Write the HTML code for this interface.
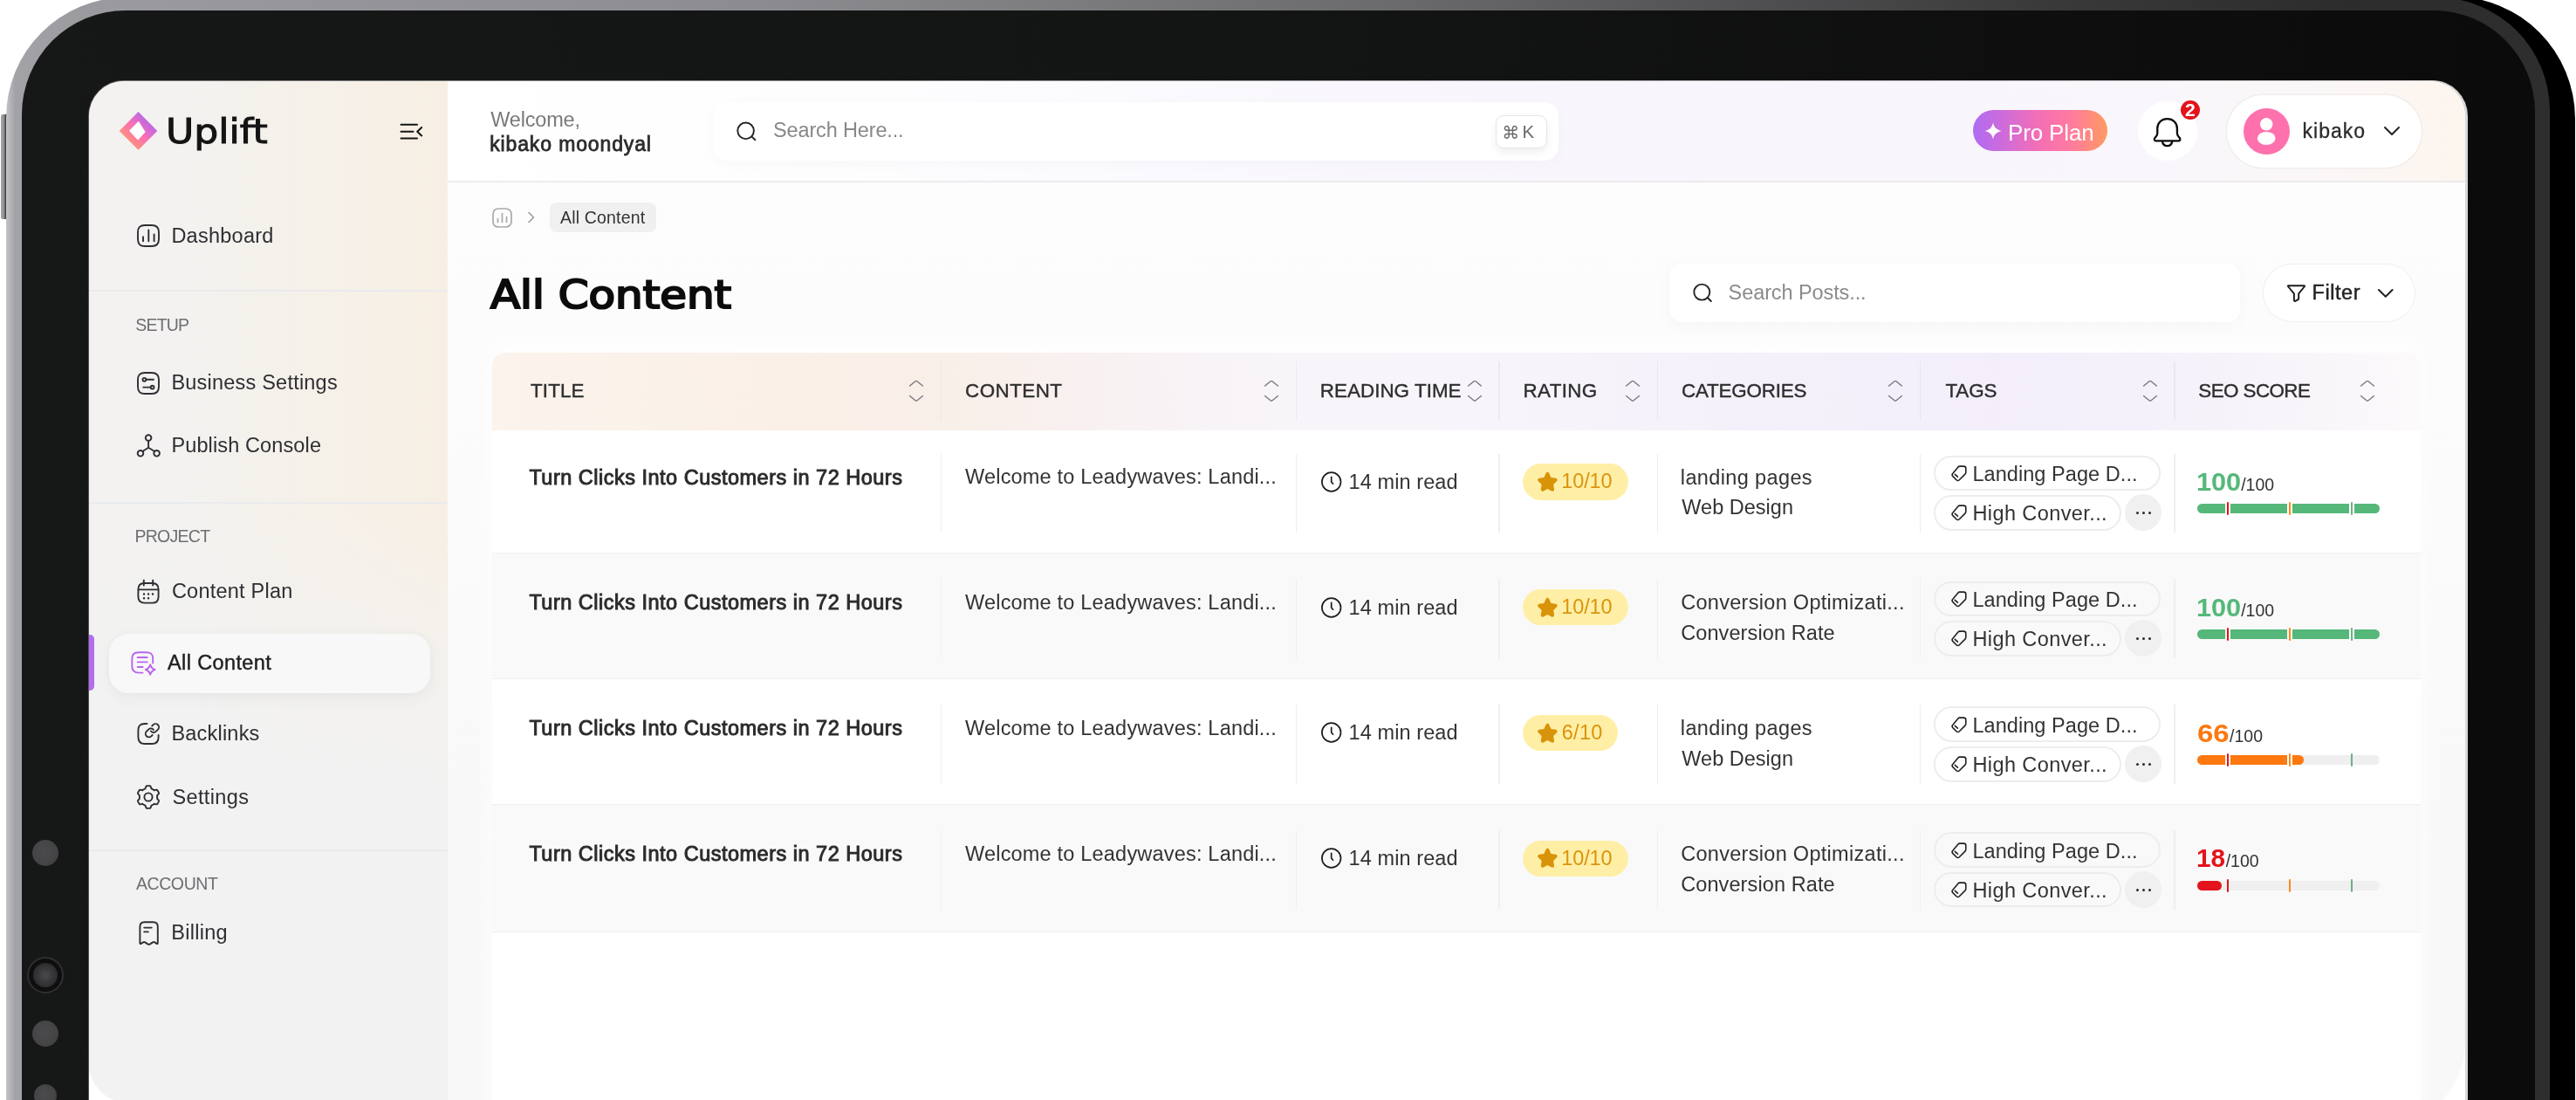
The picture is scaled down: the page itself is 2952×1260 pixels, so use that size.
<!DOCTYPE html>
<html lang="en"><head><meta charset="utf-8"><title>Uplift – All Content</title>
<style>
*{box-sizing:border-box}
html,body{margin:0;padding:0}
body{width:2952px;height:1260px;overflow:hidden;background:#fff;position:relative;font-family:"Liberation Sans",sans-serif}
.t{position:absolute;white-space:nowrap;line-height:1}
.abs{position:absolute}
svg{position:absolute;overflow:visible}
.ic{fill:none;stroke:#2e2e33;stroke-width:1.9;stroke-linecap:round;stroke-linejoin:round}
.icp{fill:none;stroke:#b765f0;stroke-width:1.9;stroke-linecap:round;stroke-linejoin:round}
.icg{fill:none;stroke:#a9a9ad;stroke-width:1.7;stroke-linecap:round;stroke-linejoin:round}
</style></head><body>


<div class="abs" style="left:1.4px;top:131px;width:8px;height:120px;background:linear-gradient(90deg,#a9a9ac 0,#8e8e91 45%,#3e3e40 70%,#4c4c4e 100%);border-radius:2px 0 0 2px"></div>
<div class="abs" style="left:40px;top:-4px;width:2911px;height:1500px;border-radius:150px 140px 0 0;background:#000"></div>
<div class="abs" style="left:7px;top:-3.5px;width:2915px;height:1500px;border-radius:138px 130px 0 0;background:linear-gradient(90deg,#c4c4c8 0,#a3a3a7 0.35%,#9b9b9f 3%,#8c8c90 30%,#6a6a6d 55%,#3a3a3b 80%,#2c2c2d 92%,#2e2e2f 100%)"></div>
<div class="abs" style="left:25px;top:11.5px;width:2880px;height:1500px;border-radius:119px 116px 0 0;background:linear-gradient(90deg,#161717 0,#131414 50%,#0b0b0b 100%)"></div>

<div class="abs" style="left:36.7px;top:962px;width:30px;height:30px;border-radius:50%;background:radial-gradient(circle at 45% 45%,#4b4b4d 0,#444446 60%,#3a3a3c 100%)"></div>
<div class="abs" style="left:30.7px;top:1096px;width:42px;height:42px;border-radius:50%;border:2.5px solid #2f2f31;background:#0e0e0f"></div>
<div class="abs" style="left:37.7px;top:1103px;width:28px;height:28px;border-radius:50%;background:radial-gradient(circle,#4a4a4c 0,#2c2c2e 70%,#232325 100%)"></div>
<div class="abs" style="left:36.7px;top:1169px;width:30px;height:30px;border-radius:50%;background:radial-gradient(circle at 45% 45%,#4b4b4d 0,#444446 60%,#3a3a3c 100%)"></div>
<div class="abs" style="left:38.7px;top:1242px;width:26px;height:26px;border-radius:50%;background:radial-gradient(circle at 45% 45%,#4b4b4d 0,#444446 60%,#3a3a3c 100%)"></div>
<div class="abs" style="left:100.5px;top:92.0px;width:2727.3px;height:1227.5px;border-radius:41px 41px 0 0;background:linear-gradient(90deg,#555 0,#777 1%,#999 50%,#cfcfcf 99%,#d8d8d8 100%)"></div>
<div id="screen" class="abs" style="left:101.5px;top:92.5px;width:2723.7000000000003px;height:1227.5px;border-radius:40px 40px 0 0;overflow:hidden;background:#fff">
<div class="abs" style="left:-101.5px;top:-92.5px;width:2952px;height:1260px;will-change:transform">
<div class="abs" style="left:512px;top:92px;width:2312.5px;height:1198px;border-radius:0 0 96px 0;background:linear-gradient(180deg,#fdfdfd 0,#fcfcfc 25%,#f9f9fa 60%,#f8f8f9 100%)"></div>
<div class="abs" style="left:512px;top:92px;width:2316px;height:115.5px;background:linear-gradient(90deg,#ffffff 0,#fdfdfe 20%,#f9f7fd 45%,#f8f5fc 62%,#f9f7fc 84%,#fbf7f7 93%,#fdf5ee 100%)"></div>
<div class="abs" style="left:512px;top:207px;width:2316px;height:1.5px;background:#ececee"></div>

<div class="abs" style="left:101px;top:92px;width:411px;height:1172px;border-radius:0 0 0 48px;background:linear-gradient(180deg,rgba(242,242,242,0) 0,rgba(242,242,242,0) 42%,rgba(242,242,242,.75) 58%,#f2f2f2 70%),linear-gradient(90deg,#f3f2f0 0,#f3f2f0 26%,#f5f1ea 55%,#f6f0e7 80%,#f7efe3 100%)"></div>
<div class="abs" style="left:512px;top:92px;width:1px;height:1180px;background:#f4efe9"></div>

<div class="abs" style="left:102px;top:332px;width:410px;height:1.5px;background:#e9eaed"></div>
<div class="abs" style="left:102px;top:575px;width:410px;height:1.5px;background:#e9eaed"></div>
<div class="abs" style="left:102px;top:973px;width:410px;height:1.5px;background:#e9eaed"></div>
<svg style="left:136px;top:127px" width="46" height="46" viewBox="0 0 46 46"><defs><linearGradient id="lg" x1="0.85" y1="0.15" x2="0.15" y2="0.85"><stop offset="0" stop-color="#a566f7"/><stop offset="0.5" stop-color="#fb6fb4"/><stop offset="1" stop-color="#ff9c6b"/></linearGradient></defs>
<path d="M22.5 1 L44.3 23 L22.5 44.8 L0.7 23 Z" fill="url(#lg)"/><path d="M22.8 11.8 L30.6 24.2 L22 33.6 L12 22.7 Z" fill="#fff"/></svg>
<span id="logo" class="t" style="left:190.2px;top:131.9px;font-size:38.8px;font-family:'DejaVu Sans',sans-serif;font-weight:400;color:#141414;letter-spacing:0.000px;-webkit-text-stroke:0.95px #141414;transform:scaleX(1.1364);transform-origin:0 0;">Uplift</span>
<svg style="left:458px;top:140px" width="28" height="22" viewBox="0 0 28 22"><g fill="none" stroke="#141414" stroke-width="2" stroke-linecap="round" stroke-linejoin="round"><path d="M1.5 2.8H20M1.5 10.7H15.5M1.5 18.6H20M25.2 6L20.2 10.7L25.2 15.4"/></g></svg>
<span id="n1" class="t" style="left:196.4px;top:258.9px;font-size:23.5px;font-family:'Liberation Sans',sans-serif;font-weight:400;color:#2e2e33;letter-spacing:0.249px;">Dashboard</span>
<span id="n2" class="t" style="left:196.4px;top:427.1px;font-size:23.5px;font-family:'Liberation Sans',sans-serif;font-weight:400;color:#2e2e33;letter-spacing:0.217px;">Business Settings</span>
<span id="n3" class="t" style="left:196.4px;top:499.3px;font-size:23.5px;font-family:'Liberation Sans',sans-serif;font-weight:400;color:#2e2e33;letter-spacing:0.126px;">Publish Console</span>
<span id="n4" class="t" style="left:196.9px;top:666.3px;font-size:23.5px;font-family:'Liberation Sans',sans-serif;font-weight:400;color:#2e2e33;letter-spacing:0.232px;">Content Plan</span>
<span id="n6" class="t" style="left:196.4px;top:829.1px;font-size:23.5px;font-family:'Liberation Sans',sans-serif;font-weight:400;color:#2e2e33;letter-spacing:0.214px;">Backlinks</span>
<span id="n7" class="t" style="left:197.5px;top:901.6px;font-size:23.5px;font-family:'Liberation Sans',sans-serif;font-weight:400;color:#2e2e33;letter-spacing:0.365px;">Settings</span>
<span id="n8" class="t" style="left:196.2px;top:1056.8px;font-size:23.5px;font-family:'Liberation Sans',sans-serif;font-weight:400;color:#2e2e33;letter-spacing:0.293px;">Billing</span>
<span id="l1" class="t" style="left:155.3px;top:362.6px;font-size:19.5px;font-family:'Liberation Sans',sans-serif;font-weight:400;color:#6e6e73;letter-spacing:-0.821px;">SETUP</span>
<span id="l2" class="t" style="left:154.4px;top:605.0px;font-size:19.5px;font-family:'Liberation Sans',sans-serif;font-weight:400;color:#6e6e73;letter-spacing:-0.725px;">PROJECT</span>
<span id="l3" class="t" style="left:155.9px;top:1002.7px;font-size:19.5px;font-family:'Liberation Sans',sans-serif;font-weight:400;color:#6e6e73;letter-spacing:-0.397px;">ACCOUNT</span>
<div class="abs" style="left:124.5px;top:725.5px;width:368.5px;height:68.5px;border-radius:22px;background:#f8f8f8;box-shadow:0 6px 18px rgba(0,0,0,.045),0 0 10px rgba(0,0,0,.02)"></div>
<div class="abs" style="left:101px;top:727px;width:7px;height:64px;border-radius:0 5px 5px 0;background:#b56cf0"></div>
<span id="n5" class="t" style="left:192.0px;top:747.9px;font-size:23.5px;font-family:'Liberation Sans',sans-serif;font-weight:400;color:#1f1f1f;letter-spacing:0.377px;-webkit-text-stroke:0.45px #1f1f1f;">All Content</span>
<svg style="left:157px;top:256.7px;" width="26" height="26" viewBox="0 0 26 26"><g class="ic"><path d="M9 1H17C22.5 1 25 3.5 25 9V17C25 22.5 22.5 25 17 25H9C3.5 25 1 22.5 1 17V9C1 3.5 3.5 1 9 1Z"/><path d="M7 14.2V19.3M13.3 6.5V19.3M19.6 11.5V19.3"/></g></svg>
<svg style="left:157px;top:425.8px;" width="26" height="26" viewBox="0 0 26 26"><g class="ic"><path d="M9 1H17C22.5 1 25 3.5 25 9V17C25 22.5 22.5 25 17 25H9C3.5 25 1 22.5 1 17V9C1 3.5 3.5 1 9 1Z"/><circle cx="8.4" cy="8.8" r="1.9"/><path d="M10.5 8.8H19"/><circle cx="17.6" cy="17.6" r="1.9"/><path d="M7.2 17.6H15.5"/></g></svg>
<svg style="left:156px;top:497px;" width="28" height="28" viewBox="0 0 28 28"><g class="ic"><circle cx="14.1" cy="4.6" r="3.3"/><circle cx="5" cy="22.3" r="3.3"/><circle cx="23.6" cy="22.3" r="3.3"/><path d="M14.1 8V15.8M14.1 15.8L7.4 20M14.1 15.8L21.2 20"/></g></svg>
<svg style="left:157px;top:663px;" width="26" height="29" viewBox="0 0 26 29"><g class="ic"><path d="M8.5 5H17.5C22 5 24.6 7.2 24.6 12V20.4C24.6 25 22 27.6 17.5 27.6H8.5C4 27.6 1.4 25 1.4 20.4V12C1.4 7.2 4 5 8.5 5Z"/><path d="M7.8 1.6V7.5M18.2 1.6V7.5M1.8 12.4H24.2"/><path d="M8 17.5H8.1M13 17.5H13.1M18 17.5H18.1M8 22.2H8.1M13 22.2H13.1" stroke-width="2.4"/></g></svg>
<svg style="left:150px;top:745px;" width="30" height="30" viewBox="0 0 30 30"><g class="icp"><path d="M25.2 14.5V9.5C25.2 4 23 2.2 17.5 2.2H9C3.5 2.2 1.3 4.5 1.3 10V17.8C1.3 23.3 3.5 25.6 9 25.6H13.5"/><path d="M7.7 8H18.7M7.7 13.4H18.7M7.7 19H13.6"/><path d="M22.2 16.3C22.9 19.3 24.3 20.9 27.6 22C24.3 23.1 22.9 24.7 22.2 27.7C21.5 24.7 20.1 23.1 16.8 22C20.1 20.9 21.5 19.3 22.2 16.3Z"/></g></svg>
<svg style="left:157px;top:827px;" width="27" height="27" viewBox="0 0 27 27"><g class="ic"><path d="M11.5 2H9C3.5 2 1.4 4.3 1.4 9.5V17.5C1.4 22.8 3.6 25 9 25H17C22.4 25 24.6 22.8 24.6 17.5V15"/><g transform="translate(8.2 0.5) scale(0.77)" stroke-width="2.45"><path d="M10 13a5 5 0 0 0 7.54.54l3-3a5 5 0 0 0-7.07-7.07l-1.72 1.71"/><path d="M14 11a5 5 0 0 0-7.54-.54l-3 3a5 5 0 0 0 7.07 7.07l1.71-1.71"/></g></g></svg>
<svg style="left:156px;top:898.5px;" width="28" height="28" viewBox="0 0 28 28"><g class="ic"><path d="M14.00 1.10L14.51 1.11L15.01 1.14L15.52 1.19L16.02 1.26L16.48 1.56L16.80 2.32L17.07 3.11L17.29 3.89L17.53 4.43L17.90 4.58L18.27 4.74L18.63 4.91L18.98 5.10L19.33 5.30L19.67 5.52L20.00 5.75L20.31 5.99L20.63 6.24L21.37 6.03L22.17 5.83L22.99 5.69L23.81 5.62L24.13 6.01L24.44 6.42L24.73 6.83L25.00 7.26L25.26 7.70L25.49 8.14L25.72 8.60L25.92 9.06L26.10 9.54L25.86 10.15L25.34 10.80L24.78 11.41L24.21 11.97L24.07 12.40L24.13 12.80L24.17 13.20L24.19 13.60L24.20 14.00L24.19 14.40L24.17 14.80L24.13 15.20L24.07 15.60L24.21 16.03L24.78 16.59L25.34 17.20L25.86 17.85L26.10 18.46L25.92 18.94L25.72 19.40L25.49 19.86L25.26 20.30L25.00 20.74L24.73 21.17L24.44 21.58L24.13 21.99L23.81 22.38L22.99 22.31L22.17 22.17L21.37 21.97L20.63 21.76L20.31 22.01L20.00 22.25L19.67 22.48L19.33 22.70L18.98 22.90L18.63 23.09L18.27 23.26L17.90 23.42L17.53 23.57L17.29 24.11L17.07 24.89L16.80 25.68L16.48 26.44L16.02 26.74L15.52 26.81L15.01 26.86L14.51 26.89L14.00 26.90L13.49 26.89L12.99 26.86L12.48 26.81L11.98 26.74L11.52 26.44L11.20 25.68L10.93 24.89L10.71 24.11L10.47 23.57L10.10 23.42L9.73 23.26L9.37 23.09L9.02 22.90L8.67 22.70L8.33 22.48L8.00 22.25L7.69 22.01L7.37 21.76L6.63 21.97L5.83 22.17L5.01 22.31L4.19 22.38L3.87 21.99L3.56 21.58L3.27 21.17L3.00 20.74L2.74 20.30L2.51 19.86L2.28 19.40L2.08 18.94L1.90 18.46L2.14 17.85L2.66 17.20L3.22 16.59L3.79 16.03L3.93 15.60L3.87 15.20L3.83 14.80L3.81 14.40L3.80 14.00L3.81 13.60L3.83 13.20L3.87 12.80L3.93 12.40L3.79 11.97L3.22 11.41L2.66 10.80L2.14 10.15L1.90 9.54L2.08 9.06L2.28 8.60L2.51 8.14L2.74 7.70L3.00 7.26L3.27 6.83L3.56 6.42L3.87 6.01L4.19 5.62L5.01 5.69L5.83 5.83L6.63 6.03L7.37 6.24L7.69 5.99L8.00 5.75L8.33 5.52L8.67 5.30L9.02 5.10L9.37 4.91L9.73 4.74L10.10 4.58L10.47 4.43L10.71 3.89L10.93 3.11L11.20 2.32L11.52 1.56L11.98 1.26L12.48 1.19L12.99 1.14L13.49 1.11L14.00 1.10Z"/><circle cx="14" cy="14" r="4.6"/></g></svg>
<svg style="left:157.5px;top:1053.5px;" width="26" height="30" viewBox="0 0 26 30"><g class="ic"><path d="M2.4 26.3V7.5C2.4 3.8 4 2.3 7.6 2.3H17.6C21.2 2.3 22.8 3.8 22.8 7.5V26.3C22.8 27 22.1 27.3 21.5 26.9L19.3 25.4C18.6 24.9 17.7 24.9 17 25.4L14 27.4C13.2 27.9 12.1 27.9 11.3 27.4L8.3 25.4C7.6 24.9 6.7 24.9 6 25.4L3.7 26.9C3.1 27.3 2.4 27 2.4 26.3Z"/><path d="M7.2 8.6H15.8M7.2 13.4H11.8"/></g></svg>
<span id="h1" class="t" style="left:562.2px;top:125.9px;font-size:23.5px;font-family:'Liberation Sans',sans-serif;font-weight:400;color:#7a7a7a;letter-spacing:-0.184px;">Welcome,</span>
<span id="h2" class="t" style="left:561.2px;top:153.8px;font-size:23px;font-family:'Liberation Sans',sans-serif;font-weight:400;color:#2b2b2b;letter-spacing:0.868px;-webkit-text-stroke:0.8px #2b2b2b;">kibako moondyal</span>
<div class="abs" style="left:817.5px;top:116.5px;width:968.5px;height:67.5px;border-radius:16px;background:#fff;box-shadow:0 4px 16px rgba(40,30,70,.022)"></div>
<svg style="left:843px;top:138px" width="26" height="26" viewBox="0 0 26 26"><g fill="none" stroke="#222" stroke-width="1.9" stroke-linecap="round"><circle cx="11.6" cy="11.8" r="9.3"/><path d="M18.6 18.6L22.4 22.2"/></g></svg>
<span id="h3" class="t" style="left:886.0px;top:138.4px;font-size:23.5px;font-family:'Liberation Sans',sans-serif;font-weight:400;color:#888889;letter-spacing:-0.143px;">Search Here...</span>
<div class="abs" style="left:1714px;top:132px;width:58.5px;height:38px;border-radius:9px;background:#fff;border:1.5px solid #e7e7ea;box-shadow:0 5px 10px rgba(0,0,0,.06)"></div>
<span id="h4" class="t" style="left:1721.3px;top:141.6px;font-size:20px;font-family:'DejaVu Sans',sans-serif;font-weight:400;color:#6a6a6a;letter-spacing:0.000px;">⌘</span>
<span id="h5" class="t" style="left:1744.4px;top:141.1px;font-size:20.5px;font-family:'Liberation Sans',sans-serif;font-weight:400;color:#6a6a6a;letter-spacing:0.000px;">K</span>
<div class="abs" style="left:2260.5px;top:126.3px;width:154.5px;height:46.7px;border-radius:24px;background:linear-gradient(90deg,#b06cf2 0,#c86be0 18%,#f56fb4 50%,#ff7aa0 72%,#ff9a62 100%)"></div>
<svg style="left:2274px;top:140px" width="20" height="20" viewBox="0 0 20 20"><path d="M10 0.3C10.9 5.6 13.6 8.8 19.7 10C13.6 11.2 10.9 14.4 10 19.7C9.1 14.4 6.4 11.2 0.3 10C6.4 8.8 9.1 5.6 10 0.3Z" fill="#fff"/></svg>
<span id="h6" class="t" style="left:2301.0px;top:139.0px;font-size:26px;font-family:'Liberation Sans',sans-serif;font-weight:400;color:#fff;letter-spacing:-0.147px;">Pro Plan</span>
<div class="abs" style="left:2449.5px;top:116.4px;width:68px;height:68px;border-radius:50%;background:#fff"></div>
<svg style="left:2467px;top:133.9px" width="34" height="36" viewBox="0 0 34 36"><g fill="none" stroke="#0c0c0c" stroke-width="2.3" stroke-linecap="round" stroke-linejoin="round"><path d="M16.6 2.1C10 2.1 5.3 6.8 5.3 13V18.3C5.3 20.3 4.7 21.4 3.5 22.7L2.5 23.8C1.1 25.4 2 27.4 4 27.4H29.2C31.2 27.4 32.1 25.4 30.7 23.8L29.7 22.7C28.5 21.4 27.9 20.3 27.9 18.3V13C27.9 6.8 23.2 2.1 16.6 2.1Z"/><path d="M10.9 27.8C11.4 30.9 13.6 33.2 16.6 33.2C19.6 33.2 21.8 30.9 22.3 27.8"/></g></svg>
<div class="abs" style="left:2498.8px;top:114.6px;width:22.6px;height:22.6px;border-radius:50%;background:#e3131b"></div>
<span id="h7" class="t" style="left:2503.9px;top:116.9px;font-size:19.5px;font-family:'Liberation Sans',sans-serif;font-weight:700;color:#fff;letter-spacing:0.000px;transform:scaleX(1.0872);transform-origin:0 0;">2</span>
<div class="abs" style="left:2551.8px;top:108.6px;width:223.2px;height:83.6px;border-radius:42px;background:#fff;box-shadow:0 0 0 1.5px rgba(0,0,0,.035)"></div>
<div class="abs" style="left:2570.9px;top:124.1px;width:52.8px;height:52.8px;border-radius:50%;background:#fe71ad"></div>
<svg style="left:2570.9px;top:124.1px" width="52.8" height="52.8" viewBox="0 0 52.8 52.8"><circle cx="26.2" cy="18.3" r="7.2" fill="#fff"/><ellipse cx="26.2" cy="34.4" rx="10.4" ry="7.5" fill="#fff"/></svg>
<span id="h8" class="t" style="left:2638.6px;top:138.5px;font-size:23px;font-family:'Liberation Sans',sans-serif;font-weight:400;color:#2b2b2b;letter-spacing:0.997px;-webkit-text-stroke:0.3px #2b2b2b;">kibako</span>
<svg style="left:2731px;top:143px" width="20" height="14" viewBox="0 0 20 14"><path d="M2 3L10 11L18 3" fill="none" stroke="#222" stroke-width="2" stroke-linecap="round" stroke-linejoin="round"/></svg>
<svg style="left:563.5px;top:237.5px;" width="23" height="23" viewBox="0 0 23 23"><g class="icg"><path d="M8 1H15C20 1 22 3 22 8V15C22 20 20 22 15 22H8C3 22 1 20 1 15V8C1 3 3 1 8 1Z"/><path d="M6.5 12.5V16.5M11.5 6.5V16.5M16.5 10.5V16.5"/></g></svg>
<svg style="left:604px;top:241px" width="10" height="16" viewBox="0 0 10 16"><path d="M2 2.5L7.5 8L2 13.5" fill="none" stroke="#9a9a9e" stroke-width="1.6" stroke-linecap="round" stroke-linejoin="round"/></svg>
<div class="abs" style="left:629.8px;top:232px;width:122.5px;height:34.3px;border-radius:8px;background:#f0f0f0"></div>
<span id="b1" class="t" style="left:642.0px;top:240.0px;font-size:19.5px;font-family:'Liberation Sans',sans-serif;font-weight:400;color:#333;letter-spacing:0.175px;">All Content</span>
<span id="title" class="t" style="left:562.2px;top:316.4px;font-size:44.5px;font-family:'DejaVu Sans',sans-serif;font-weight:400;color:#0c0c0c;letter-spacing:0.000px;-webkit-text-stroke:2.2px #0c0c0c;transform:scaleX(1.1208);transform-origin:0 0;">All Content</span>
<div class="abs" style="left:1913px;top:302.4px;width:653.6px;height:66.6px;border-radius:15px;background:#fff;box-shadow:0 4px 20px rgba(0,0,0,.03)"></div>
<svg style="left:1938.5px;top:323px" width="26" height="26" viewBox="0 0 26 26"><g fill="none" stroke="#222" stroke-width="1.9" stroke-linecap="round"><circle cx="11.3" cy="11.6" r="9"/><path d="M18 18.3L21.8 22"/></g></svg>
<span id="s1" class="t" style="left:1980.6px;top:323.9px;font-size:23.5px;font-family:'Liberation Sans',sans-serif;font-weight:400;color:#8b8b8b;letter-spacing:-0.092px;">Search Posts...</span>
<div class="abs" style="left:2592.8px;top:302.4px;width:175.2px;height:66.6px;border-radius:34px;background:#fff;border:1.5px solid #efeff1"></div>
<svg style="left:2620px;top:325px" width="23" height="22" viewBox="0 0 23 22"><path d="M2.2 2.2H20.6C21 2.2 21.2 2.7 21 3L14.2 11.3V17.2C14.2 17.6 14 18 13.6 18.2L10.4 19.8C9.6 20.2 8.9 19.7 8.9 18.9V11.3L2 3C1.7 2.7 1.9 2.2 2.2 2.2Z" fill="none" stroke="#1c1c1c" stroke-width="1.9" stroke-linejoin="round"/></svg>
<span id="s2" class="t" style="left:2649.5px;top:323.9px;font-size:23.5px;font-family:'Liberation Sans',sans-serif;font-weight:400;color:#222;letter-spacing:0.546px;-webkit-text-stroke:0.45px #222;">Filter</span>
<svg style="left:2724px;top:329px" width="20" height="14" viewBox="0 0 20 14"><path d="M2 3L9.8 10.8L17.6 3" fill="none" stroke="#222" stroke-width="2" stroke-linecap="round" stroke-linejoin="round"/></svg>
<div class="abs" style="left:563.5px;top:403.5px;width:2210.2px;height:900px;border-radius:15px 15px 0 0;background:#fff;box-shadow:0 -10px 28px rgba(255,255,255,.9)"></div>
<div class="abs" style="left:563.5px;top:403.5px;width:2210.2px;height:900px;border-radius:15px 15px 0 0;background:#fff;overflow:hidden">
<div class="abs" style="left:0;top:0;width:100%;height:89.3px;background:linear-gradient(90deg,#fbf3ec 0,#faf0e7 14%,#f9efe9 24%,#f8f2f4 34%,#f8f5fa 42%,#f7f4fb 52%,#f5f1fa 64%,#f3eefa 78%,#f6f2fa 89%,#fcfafb 100%)"></div>
</div>
<div class="abs" style="left:1077.55px;top:414px;width:1.5px;height:67px;background:rgba(60,40,90,.05)"></div>
<div class="abs" style="left:1484.75px;top:414px;width:1.5px;height:67px;background:rgba(60,40,90,.05)"></div>
<div class="abs" style="left:1717.25px;top:414px;width:1.5px;height:67px;background:rgba(60,40,90,.05)"></div>
<div class="abs" style="left:1898.95px;top:414px;width:1.5px;height:67px;background:rgba(60,40,90,.05)"></div>
<div class="abs" style="left:2199.75px;top:414px;width:1.5px;height:67px;background:rgba(60,40,90,.05)"></div>
<div class="abs" style="left:2491.25px;top:414px;width:1.5px;height:67px;background:rgba(60,40,90,.05)"></div>
<span id="th1" class="t" style="left:608.1px;top:436.9px;font-size:22.4px;font-family:'Liberation Sans',sans-serif;font-weight:400;color:#2e2e2e;letter-spacing:0.076px;-webkit-text-stroke:0.4px #2e2e2e;">TITLE</span>
<span id="th2" class="t" style="left:1106.0px;top:436.9px;font-size:22.4px;font-family:'Liberation Sans',sans-serif;font-weight:400;color:#2e2e2e;letter-spacing:0.462px;-webkit-text-stroke:0.4px #2e2e2e;">CONTENT</span>
<span id="th3" class="t" style="left:1512.8px;top:436.9px;font-size:22.4px;font-family:'Liberation Sans',sans-serif;font-weight:400;color:#2e2e2e;letter-spacing:0.037px;-webkit-text-stroke:0.4px #2e2e2e;">READING TIME</span>
<span id="th4" class="t" style="left:1745.5px;top:436.9px;font-size:22.4px;font-family:'Liberation Sans',sans-serif;font-weight:400;color:#2e2e2e;letter-spacing:0.353px;-webkit-text-stroke:0.4px #2e2e2e;">RATING</span>
<span id="th5" class="t" style="left:1927.0px;top:436.9px;font-size:22.4px;font-family:'Liberation Sans',sans-serif;font-weight:400;color:#2e2e2e;letter-spacing:-0.180px;-webkit-text-stroke:0.4px #2e2e2e;">CATEGORIES</span>
<span id="th6" class="t" style="left:2229.5px;top:436.9px;font-size:22.4px;font-family:'Liberation Sans',sans-serif;font-weight:400;color:#2e2e2e;letter-spacing:-0.145px;-webkit-text-stroke:0.4px #2e2e2e;">TAGS</span>
<span id="th7" class="t" style="left:2519.3px;top:436.9px;font-size:22.4px;font-family:'Liberation Sans',sans-serif;font-weight:400;color:#2e2e2e;letter-spacing:-0.568px;-webkit-text-stroke:0.4px #2e2e2e;">SEO SCORE</span>
<svg style="left:1041px;top:434.4px" width="18" height="27" viewBox="0 0 18 27"><path d="M1.6 8.1L8 2.8Q9 2 10 2.8L16.4 8.1M1.6 19.4L8 24.7Q9 25.5 10 24.7L16.4 19.4" fill="none" stroke="#77777b" stroke-width="1.35" stroke-linecap="round" stroke-linejoin="round"/></svg>
<svg style="left:1447.5px;top:434.4px" width="18" height="27" viewBox="0 0 18 27"><path d="M1.6 8.1L8 2.8Q9 2 10 2.8L16.4 8.1M1.6 19.4L8 24.7Q9 25.5 10 24.7L16.4 19.4" fill="none" stroke="#77777b" stroke-width="1.35" stroke-linecap="round" stroke-linejoin="round"/></svg>
<svg style="left:1681px;top:434.4px" width="18" height="27" viewBox="0 0 18 27"><path d="M1.6 8.1L8 2.8Q9 2 10 2.8L16.4 8.1M1.6 19.4L8 24.7Q9 25.5 10 24.7L16.4 19.4" fill="none" stroke="#77777b" stroke-width="1.35" stroke-linecap="round" stroke-linejoin="round"/></svg>
<svg style="left:1862px;top:434.4px" width="18" height="27" viewBox="0 0 18 27"><path d="M1.6 8.1L8 2.8Q9 2 10 2.8L16.4 8.1M1.6 19.4L8 24.7Q9 25.5 10 24.7L16.4 19.4" fill="none" stroke="#77777b" stroke-width="1.35" stroke-linecap="round" stroke-linejoin="round"/></svg>
<svg style="left:2163.3px;top:434.4px" width="18" height="27" viewBox="0 0 18 27"><path d="M1.6 8.1L8 2.8Q9 2 10 2.8L16.4 8.1M1.6 19.4L8 24.7Q9 25.5 10 24.7L16.4 19.4" fill="none" stroke="#77777b" stroke-width="1.35" stroke-linecap="round" stroke-linejoin="round"/></svg>
<svg style="left:2454.6px;top:434.4px" width="18" height="27" viewBox="0 0 18 27"><path d="M1.6 8.1L8 2.8Q9 2 10 2.8L16.4 8.1M1.6 19.4L8 24.7Q9 25.5 10 24.7L16.4 19.4" fill="none" stroke="#77777b" stroke-width="1.35" stroke-linecap="round" stroke-linejoin="round"/></svg>
<svg style="left:2704px;top:434.4px" width="18" height="27" viewBox="0 0 18 27"><path d="M1.6 8.1L8 2.8Q9 2 10 2.8L16.4 8.1M1.6 19.4L8 24.7Q9 25.5 10 24.7L16.4 19.4" fill="none" stroke="#77777b" stroke-width="1.35" stroke-linecap="round" stroke-linejoin="round"/></svg>
<div class="abs" style="left:563.5px;top:492.8px;width:2210.2px;height:141.6px;background:#fff;border-bottom:1.5px solid #efefef"></div>
<div class="abs" style="left:1077.55px;top:519.5px;width:1.5px;height:90.5px;background:#efeff1"></div>
<div class="abs" style="left:1484.75px;top:519.5px;width:1.5px;height:90.5px;background:#efeff1"></div>
<div class="abs" style="left:1717.25px;top:519.5px;width:1.5px;height:90.5px;background:#efeff1"></div>
<div class="abs" style="left:1898.95px;top:519.5px;width:1.5px;height:90.5px;background:#efeff1"></div>
<div class="abs" style="left:2199.75px;top:519.5px;width:1.5px;height:90.5px;background:#efeff1"></div>
<div class="abs" style="left:2491.25px;top:519.5px;width:1.5px;height:90.5px;background:#efeff1"></div>
<span id="r0a" class="t" style="left:606.4px;top:535.5px;font-size:23.5px;font-family:'Liberation Sans',sans-serif;font-weight:400;color:#2b2b2b;letter-spacing:0.494px;-webkit-text-stroke:0.95px #2b2b2b;">Turn Clicks Into Customers in 72 Hours</span>
<span id="r0b" class="t" style="left:1106.0px;top:535.2px;font-size:23.5px;font-family:'Liberation Sans',sans-serif;font-weight:400;color:#333;letter-spacing:0.196px;">Welcome to Leadywaves: Landi...</span>
<svg style="left:1513px;top:538.7px" width="26" height="26" viewBox="0 0 26 26"><g fill="none" stroke="#1c1c1c" stroke-width="1.7" stroke-linecap="round" stroke-linejoin="round"><circle cx="12.7" cy="13" r="10.8"/><path d="M12.7 7.4V13L14.6 15.2"/></g></svg>
<span id="r0c" class="t" style="left:1545.5px;top:540.6px;font-size:23.5px;font-family:'Liberation Sans',sans-serif;font-weight:400;color:#333;letter-spacing:0.099px;">14 min read</span>
<div class="abs" style="left:1745px;top:531.0px;width:121px;height:41.5px;border-radius:21px;background:#ffefa6"></div>
<svg style="left:1759.7px;top:538.8px" width="26.8" height="26.8" viewBox="0 0 24 24"><path d="M12 1.6C12.7 1.6 13.3 2 13.6 2.7L15.7 7.1L20.5 7.8C22 8 22.6 9.8 21.5 10.9L18 14.3L18.8 19.1C19.1 20.6 17.5 21.7 16.2 21L12 18.7L7.8 21C6.5 21.7 4.9 20.6 5.2 19.1L6 14.3L2.5 10.9C1.4 9.8 2 8 3.5 7.8L8.3 7.1L10.4 2.7C10.7 2 11.3 1.6 12 1.6Z" fill="#d99309"/></svg>
<span id="r0d" class="t" style="left:1789.3px;top:540.2px;font-size:23.5px;font-family:'Liberation Sans',sans-serif;font-weight:400;color:#db940c;letter-spacing:-0.138px;">10/10</span>
<span id="r0e" class="t" style="left:1925.8px;top:535.5px;font-size:23.5px;font-family:'Liberation Sans',sans-serif;font-weight:400;color:#333;letter-spacing:0.371px;">landing pages</span>
<span id="r0f" class="t" style="left:1927.3px;top:570.4px;font-size:23.5px;font-family:'Liberation Sans',sans-serif;font-weight:400;color:#333;letter-spacing:0.016px;">Web Design</span>
<div class="abs" style="left:2216.3px;top:521.7px;width:260.2px;height:40.6px;border-radius:21px;border:2px solid #ededed"></div>
<div class="abs" style="left:2216.3px;top:567.1px;width:214.8px;height:40.8px;border-radius:21px;border:2px solid #ededed"></div>
<svg style="left:2234.8px;top:532.1px" width="20" height="20" viewBox="0 0 20 20"><g fill="none" stroke="#222" stroke-width="1.6" stroke-linecap="round" stroke-linejoin="round"><path d="M10.6 2.1H15.3C16.9 2.1 17.8 3 17.8 4.6V9C17.8 9.8 17.5 10.5 16.9 11.1L10.3 17.7C9.3 18.7 8 18.7 7 17.7L2.9 13.6C1.9 12.6 1.9 11.3 2.9 10.3L8.9 3C9.4 2.4 9.9 2.1 10.6 2.1Z"/><path d="M5.3 11.4L8.4 14.1"/></g></svg>
<svg style="left:2234.8px;top:577.0px" width="20" height="20" viewBox="0 0 20 20"><g fill="none" stroke="#222" stroke-width="1.6" stroke-linecap="round" stroke-linejoin="round"><path d="M10.6 2.1H15.3C16.9 2.1 17.8 3 17.8 4.6V9C17.8 9.8 17.5 10.5 16.9 11.1L10.3 17.7C9.3 18.7 8 18.7 7 17.7L2.9 13.6C1.9 12.6 1.9 11.3 2.9 10.3L8.9 3C9.4 2.4 9.9 2.1 10.6 2.1Z"/><path d="M5.3 11.4L8.4 14.1"/></g></svg>
<span id="r0g" class="t" style="left:2260.4px;top:532.0px;font-size:23.5px;font-family:'Liberation Sans',sans-serif;font-weight:400;color:#333;letter-spacing:0.064px;">Landing Page D...</span>
<span id="r0h" class="t" style="left:2260.4px;top:576.9px;font-size:23.5px;font-family:'Liberation Sans',sans-serif;font-weight:400;color:#333;letter-spacing:0.412px;">High Conver...</span>
<div class="abs" style="left:2435.3px;top:566.4px;width:42px;height:42px;border-radius:50%;background:#f0f0f0"></div>
<div class="abs" style="left:2448.3px;top:586.1px;width:3px;height:3px;border-radius:50%;background:#2a2a2a"></div>
<div class="abs" style="left:2454.9px;top:586.1px;width:3px;height:3px;border-radius:50%;background:#2a2a2a"></div>
<div class="abs" style="left:2461.5px;top:586.1px;width:3px;height:3px;border-radius:50%;background:#2a2a2a"></div>
<span id="r0s" class="t" style="left:2516.7px;top:537.9px;font-size:29px;font-family:'Liberation Sans',sans-serif;font-weight:700;color:#55b87a;letter-spacing:0.000px;transform:scaleX(1.0573);transform-origin:0 0;">100</span>
<span id="r0t" class="t" style="left:2568.2px;top:545.9px;font-size:19.5px;font-family:'Liberation Sans',sans-serif;font-weight:400;color:#333;letter-spacing:0.011px;">/100</span>
<div class="abs" style="left:2518.2px;top:577.0px;width:208.6px;height:11.4px;border-radius:6px;background:#efefef"></div>
<div class="abs" style="left:2518.2px;top:577.0px;width:208.6px;height:11.4px;border-radius:6px;background:#55b87a"></div>
<div class="abs" style="left:2549.9px;top:575.0px;width:6px;height:15.4px;background:#fff"></div>
<div class="abs" style="left:2551.7px;top:575.0px;width:2.5px;height:15.4px;border-radius:1px;background:#e3141b"></div>
<div class="abs" style="left:2621.0px;top:575.0px;width:6px;height:15.4px;background:#fff"></div>
<div class="abs" style="left:2622.8px;top:575.0px;width:2.5px;height:15.4px;border-radius:1px;background:#fd8a1e"></div>
<div class="abs" style="left:2692.0px;top:575.0px;width:6px;height:15.4px;background:#fff"></div>
<div class="abs" style="left:2693.8px;top:575.0px;width:2.5px;height:15.4px;border-radius:1px;background:#6fae86"></div>
<div class="abs" style="left:563.5px;top:634.4px;width:2210.2px;height:143.9px;background:#f9f9f9;border-bottom:1.5px solid #efefef"></div>
<div class="abs" style="left:1077.55px;top:663.4px;width:1.5px;height:90.5px;background:#efeff1"></div>
<div class="abs" style="left:1484.75px;top:663.4px;width:1.5px;height:90.5px;background:#efeff1"></div>
<div class="abs" style="left:1717.25px;top:663.4px;width:1.5px;height:90.5px;background:#efeff1"></div>
<div class="abs" style="left:1898.95px;top:663.4px;width:1.5px;height:90.5px;background:#efeff1"></div>
<div class="abs" style="left:2199.75px;top:663.4px;width:1.5px;height:90.5px;background:#efeff1"></div>
<div class="abs" style="left:2491.25px;top:663.4px;width:1.5px;height:90.5px;background:#efeff1"></div>
<span id="r1a" class="t" style="left:606.4px;top:679.4px;font-size:23.5px;font-family:'Liberation Sans',sans-serif;font-weight:400;color:#2b2b2b;letter-spacing:0.494px;-webkit-text-stroke:0.95px #2b2b2b;">Turn Clicks Into Customers in 72 Hours</span>
<span id="r1b" class="t" style="left:1106.0px;top:679.1px;font-size:23.5px;font-family:'Liberation Sans',sans-serif;font-weight:400;color:#333;letter-spacing:0.196px;">Welcome to Leadywaves: Landi...</span>
<svg style="left:1513px;top:682.5px" width="26" height="26" viewBox="0 0 26 26"><g fill="none" stroke="#1c1c1c" stroke-width="1.7" stroke-linecap="round" stroke-linejoin="round"><circle cx="12.7" cy="13" r="10.8"/><path d="M12.7 7.4V13L14.6 15.2"/></g></svg>
<span id="r1c" class="t" style="left:1545.5px;top:684.5px;font-size:23.5px;font-family:'Liberation Sans',sans-serif;font-weight:400;color:#333;letter-spacing:0.099px;">14 min read</span>
<div class="abs" style="left:1745px;top:674.9px;width:121px;height:41.5px;border-radius:21px;background:#ffefa6"></div>
<svg style="left:1759.7px;top:682.6px" width="26.8" height="26.8" viewBox="0 0 24 24"><path d="M12 1.6C12.7 1.6 13.3 2 13.6 2.7L15.7 7.1L20.5 7.8C22 8 22.6 9.8 21.5 10.9L18 14.3L18.8 19.1C19.1 20.6 17.5 21.7 16.2 21L12 18.7L7.8 21C6.5 21.7 4.9 20.6 5.2 19.1L6 14.3L2.5 10.9C1.4 9.8 2 8 3.5 7.8L8.3 7.1L10.4 2.7C10.7 2 11.3 1.6 12 1.6Z" fill="#d99309"/></svg>
<span id="r1d" class="t" style="left:1789.3px;top:684.1px;font-size:23.5px;font-family:'Liberation Sans',sans-serif;font-weight:400;color:#db940c;letter-spacing:-0.138px;">10/10</span>
<span id="r1e" class="t" style="left:1926.2px;top:679.4px;font-size:23.5px;font-family:'Liberation Sans',sans-serif;font-weight:400;color:#333;letter-spacing:0.295px;">Conversion Optimizati...</span>
<span id="r1f" class="t" style="left:1926.2px;top:714.3px;font-size:23.5px;font-family:'Liberation Sans',sans-serif;font-weight:400;color:#333;letter-spacing:0.101px;">Conversion Rate</span>
<div class="abs" style="left:2216.3px;top:665.5px;width:260.2px;height:40.6px;border-radius:21px;border:2px solid #ededed"></div>
<div class="abs" style="left:2216.3px;top:711.0px;width:214.8px;height:40.8px;border-radius:21px;border:2px solid #ededed"></div>
<svg style="left:2234.8px;top:676.0px" width="20" height="20" viewBox="0 0 20 20"><g fill="none" stroke="#222" stroke-width="1.6" stroke-linecap="round" stroke-linejoin="round"><path d="M10.6 2.1H15.3C16.9 2.1 17.8 3 17.8 4.6V9C17.8 9.8 17.5 10.5 16.9 11.1L10.3 17.7C9.3 18.7 8 18.7 7 17.7L2.9 13.6C1.9 12.6 1.9 11.3 2.9 10.3L8.9 3C9.4 2.4 9.9 2.1 10.6 2.1Z"/><path d="M5.3 11.4L8.4 14.1"/></g></svg>
<svg style="left:2234.8px;top:720.9px" width="20" height="20" viewBox="0 0 20 20"><g fill="none" stroke="#222" stroke-width="1.6" stroke-linecap="round" stroke-linejoin="round"><path d="M10.6 2.1H15.3C16.9 2.1 17.8 3 17.8 4.6V9C17.8 9.8 17.5 10.5 16.9 11.1L10.3 17.7C9.3 18.7 8 18.7 7 17.7L2.9 13.6C1.9 12.6 1.9 11.3 2.9 10.3L8.9 3C9.4 2.4 9.9 2.1 10.6 2.1Z"/><path d="M5.3 11.4L8.4 14.1"/></g></svg>
<span id="r1g" class="t" style="left:2260.4px;top:675.9px;font-size:23.5px;font-family:'Liberation Sans',sans-serif;font-weight:400;color:#333;letter-spacing:0.064px;">Landing Page D...</span>
<span id="r1h" class="t" style="left:2260.4px;top:720.8px;font-size:23.5px;font-family:'Liberation Sans',sans-serif;font-weight:400;color:#333;letter-spacing:0.412px;">High Conver...</span>
<div class="abs" style="left:2435.3px;top:710.2px;width:42px;height:42px;border-radius:50%;background:#f0f0f0"></div>
<div class="abs" style="left:2448.3px;top:730.0px;width:3px;height:3px;border-radius:50%;background:#2a2a2a"></div>
<div class="abs" style="left:2454.9px;top:730.0px;width:3px;height:3px;border-radius:50%;background:#2a2a2a"></div>
<div class="abs" style="left:2461.5px;top:730.0px;width:3px;height:3px;border-radius:50%;background:#2a2a2a"></div>
<span id="r1s" class="t" style="left:2516.7px;top:681.7px;font-size:29px;font-family:'Liberation Sans',sans-serif;font-weight:700;color:#55b87a;letter-spacing:0.000px;transform:scaleX(1.0573);transform-origin:0 0;">100</span>
<span id="r1t" class="t" style="left:2568.2px;top:689.7px;font-size:19.5px;font-family:'Liberation Sans',sans-serif;font-weight:400;color:#333;letter-spacing:0.011px;">/100</span>
<div class="abs" style="left:2518.2px;top:720.9px;width:208.6px;height:11.4px;border-radius:6px;background:#efefef"></div>
<div class="abs" style="left:2518.2px;top:720.9px;width:208.6px;height:11.4px;border-radius:6px;background:#55b87a"></div>
<div class="abs" style="left:2549.9px;top:718.9px;width:6px;height:15.4px;background:#f9f9f9"></div>
<div class="abs" style="left:2551.7px;top:718.9px;width:2.5px;height:15.4px;border-radius:1px;background:#e3141b"></div>
<div class="abs" style="left:2621.0px;top:718.9px;width:6px;height:15.4px;background:#f9f9f9"></div>
<div class="abs" style="left:2622.8px;top:718.9px;width:2.5px;height:15.4px;border-radius:1px;background:#fd8a1e"></div>
<div class="abs" style="left:2692.0px;top:718.9px;width:6px;height:15.4px;background:#f9f9f9"></div>
<div class="abs" style="left:2693.8px;top:718.9px;width:2.5px;height:15.4px;border-radius:1px;background:#6fae86"></div>
<div class="abs" style="left:563.5px;top:778.2px;width:2210.2px;height:143.8px;background:#fff;border-bottom:1.5px solid #efefef"></div>
<div class="abs" style="left:1077.55px;top:807.2px;width:1.5px;height:90.5px;background:#efeff1"></div>
<div class="abs" style="left:1484.75px;top:807.2px;width:1.5px;height:90.5px;background:#efeff1"></div>
<div class="abs" style="left:1717.25px;top:807.2px;width:1.5px;height:90.5px;background:#efeff1"></div>
<div class="abs" style="left:1898.95px;top:807.2px;width:1.5px;height:90.5px;background:#efeff1"></div>
<div class="abs" style="left:2199.75px;top:807.2px;width:1.5px;height:90.5px;background:#efeff1"></div>
<div class="abs" style="left:2491.25px;top:807.2px;width:1.5px;height:90.5px;background:#efeff1"></div>
<span id="r2a" class="t" style="left:606.4px;top:823.2px;font-size:23.5px;font-family:'Liberation Sans',sans-serif;font-weight:400;color:#2b2b2b;letter-spacing:0.494px;-webkit-text-stroke:0.95px #2b2b2b;">Turn Clicks Into Customers in 72 Hours</span>
<span id="r2b" class="t" style="left:1106.0px;top:822.9px;font-size:23.5px;font-family:'Liberation Sans',sans-serif;font-weight:400;color:#333;letter-spacing:0.196px;">Welcome to Leadywaves: Landi...</span>
<svg style="left:1513px;top:826.4px" width="26" height="26" viewBox="0 0 26 26"><g fill="none" stroke="#1c1c1c" stroke-width="1.7" stroke-linecap="round" stroke-linejoin="round"><circle cx="12.7" cy="13" r="10.8"/><path d="M12.7 7.4V13L14.6 15.2"/></g></svg>
<span id="r2c" class="t" style="left:1545.5px;top:828.3px;font-size:23.5px;font-family:'Liberation Sans',sans-serif;font-weight:400;color:#333;letter-spacing:0.099px;">14 min read</span>
<div class="abs" style="left:1745px;top:818.7px;width:108.5px;height:41.5px;border-radius:21px;background:#ffefa6"></div>
<svg style="left:1759.7px;top:826.5px" width="26.8" height="26.8" viewBox="0 0 24 24"><path d="M12 1.6C12.7 1.6 13.3 2 13.6 2.7L15.7 7.1L20.5 7.8C22 8 22.6 9.8 21.5 10.9L18 14.3L18.8 19.1C19.1 20.6 17.5 21.7 16.2 21L12 18.7L7.8 21C6.5 21.7 4.9 20.6 5.2 19.1L6 14.3L2.5 10.9C1.4 9.8 2 8 3.5 7.8L8.3 7.1L10.4 2.7C10.7 2 11.3 1.6 12 1.6Z" fill="#d99309"/></svg>
<span id="r2d" class="t" style="left:1789.7px;top:827.9px;font-size:23.5px;font-family:'Liberation Sans',sans-serif;font-weight:400;color:#db940c;letter-spacing:0.316px;">6/10</span>
<span id="r2e" class="t" style="left:1925.8px;top:823.2px;font-size:23.5px;font-family:'Liberation Sans',sans-serif;font-weight:400;color:#333;letter-spacing:0.371px;">landing pages</span>
<span id="r2f" class="t" style="left:1927.3px;top:858.1px;font-size:23.5px;font-family:'Liberation Sans',sans-serif;font-weight:400;color:#333;letter-spacing:0.016px;">Web Design</span>
<div class="abs" style="left:2216.3px;top:809.4px;width:260.2px;height:40.6px;border-radius:21px;border:2px solid #ededed"></div>
<div class="abs" style="left:2216.3px;top:854.8px;width:214.8px;height:40.8px;border-radius:21px;border:2px solid #ededed"></div>
<svg style="left:2234.8px;top:819.8px" width="20" height="20" viewBox="0 0 20 20"><g fill="none" stroke="#222" stroke-width="1.6" stroke-linecap="round" stroke-linejoin="round"><path d="M10.6 2.1H15.3C16.9 2.1 17.8 3 17.8 4.6V9C17.8 9.8 17.5 10.5 16.9 11.1L10.3 17.7C9.3 18.7 8 18.7 7 17.7L2.9 13.6C1.9 12.6 1.9 11.3 2.9 10.3L8.9 3C9.4 2.4 9.9 2.1 10.6 2.1Z"/><path d="M5.3 11.4L8.4 14.1"/></g></svg>
<svg style="left:2234.8px;top:864.7px" width="20" height="20" viewBox="0 0 20 20"><g fill="none" stroke="#222" stroke-width="1.6" stroke-linecap="round" stroke-linejoin="round"><path d="M10.6 2.1H15.3C16.9 2.1 17.8 3 17.8 4.6V9C17.8 9.8 17.5 10.5 16.9 11.1L10.3 17.7C9.3 18.7 8 18.7 7 17.7L2.9 13.6C1.9 12.6 1.9 11.3 2.9 10.3L8.9 3C9.4 2.4 9.9 2.1 10.6 2.1Z"/><path d="M5.3 11.4L8.4 14.1"/></g></svg>
<span id="r2g" class="t" style="left:2260.4px;top:819.7px;font-size:23.5px;font-family:'Liberation Sans',sans-serif;font-weight:400;color:#333;letter-spacing:0.064px;">Landing Page D...</span>
<span id="r2h" class="t" style="left:2260.4px;top:864.6px;font-size:23.5px;font-family:'Liberation Sans',sans-serif;font-weight:400;color:#333;letter-spacing:0.412px;">High Conver...</span>
<div class="abs" style="left:2435.3px;top:854.1px;width:42px;height:42px;border-radius:50%;background:#f0f0f0"></div>
<div class="abs" style="left:2448.3px;top:873.8px;width:3px;height:3px;border-radius:50%;background:#2a2a2a"></div>
<div class="abs" style="left:2454.9px;top:873.8px;width:3px;height:3px;border-radius:50%;background:#2a2a2a"></div>
<div class="abs" style="left:2461.5px;top:873.8px;width:3px;height:3px;border-radius:50%;background:#2a2a2a"></div>
<span id="r2s" class="t" style="left:2517.6px;top:825.6px;font-size:29px;font-family:'Liberation Sans',sans-serif;font-weight:700;color:#fd780f;letter-spacing:0.000px;transform:scaleX(1.1362);transform-origin:0 0;">66</span>
<span id="r2t" class="t" style="left:2555.0px;top:833.6px;font-size:19.5px;font-family:'Liberation Sans',sans-serif;font-weight:400;color:#333;letter-spacing:0.011px;">/100</span>
<div class="abs" style="left:2518.2px;top:864.7px;width:208.6px;height:11.4px;border-radius:6px;background:#efefef"></div>
<div class="abs" style="left:2518.2px;top:864.7px;width:122.2px;height:11.4px;border-radius:6px;background:#fd780f"></div>
<div class="abs" style="left:2549.9px;top:862.7px;width:6px;height:15.4px;background:#fff"></div>
<div class="abs" style="left:2551.7px;top:862.7px;width:2.5px;height:15.4px;border-radius:1px;background:#e3141b"></div>
<div class="abs" style="left:2621.0px;top:862.7px;width:6px;height:15.4px;background:#fff"></div>
<div class="abs" style="left:2622.8px;top:862.7px;width:2.5px;height:15.4px;border-radius:1px;background:#fd8a1e"></div>
<div class="abs" style="left:2693.8px;top:862.7px;width:2.5px;height:15.4px;border-radius:1px;background:#6fae86"></div>
<div class="abs" style="left:563.5px;top:922.0px;width:2210.2px;height:145.5px;background:#f9f9f9;border-bottom:1.5px solid #efefef"></div>
<div class="abs" style="left:1077.55px;top:951.0px;width:1.5px;height:90.5px;background:#efeff1"></div>
<div class="abs" style="left:1484.75px;top:951.0px;width:1.5px;height:90.5px;background:#efeff1"></div>
<div class="abs" style="left:1717.25px;top:951.0px;width:1.5px;height:90.5px;background:#efeff1"></div>
<div class="abs" style="left:1898.95px;top:951.0px;width:1.5px;height:90.5px;background:#efeff1"></div>
<div class="abs" style="left:2199.75px;top:951.0px;width:1.5px;height:90.5px;background:#efeff1"></div>
<div class="abs" style="left:2491.25px;top:951.0px;width:1.5px;height:90.5px;background:#efeff1"></div>
<span id="r3a" class="t" style="left:606.4px;top:967.1px;font-size:23.5px;font-family:'Liberation Sans',sans-serif;font-weight:400;color:#2b2b2b;letter-spacing:0.494px;-webkit-text-stroke:0.95px #2b2b2b;">Turn Clicks Into Customers in 72 Hours</span>
<span id="r3b" class="t" style="left:1106.0px;top:966.8px;font-size:23.5px;font-family:'Liberation Sans',sans-serif;font-weight:400;color:#333;letter-spacing:0.196px;">Welcome to Leadywaves: Landi...</span>
<svg style="left:1513px;top:970.2px" width="26" height="26" viewBox="0 0 26 26"><g fill="none" stroke="#1c1c1c" stroke-width="1.7" stroke-linecap="round" stroke-linejoin="round"><circle cx="12.7" cy="13" r="10.8"/><path d="M12.7 7.4V13L14.6 15.2"/></g></svg>
<span id="r3c" class="t" style="left:1545.5px;top:972.2px;font-size:23.5px;font-family:'Liberation Sans',sans-serif;font-weight:400;color:#333;letter-spacing:0.099px;">14 min read</span>
<div class="abs" style="left:1745px;top:962.5px;width:121px;height:41.5px;border-radius:21px;background:#ffefa6"></div>
<svg style="left:1759.7px;top:970.3px" width="26.8" height="26.8" viewBox="0 0 24 24"><path d="M12 1.6C12.7 1.6 13.3 2 13.6 2.7L15.7 7.1L20.5 7.8C22 8 22.6 9.8 21.5 10.9L18 14.3L18.8 19.1C19.1 20.6 17.5 21.7 16.2 21L12 18.7L7.8 21C6.5 21.7 4.9 20.6 5.2 19.1L6 14.3L2.5 10.9C1.4 9.8 2 8 3.5 7.8L8.3 7.1L10.4 2.7C10.7 2 11.3 1.6 12 1.6Z" fill="#d99309"/></svg>
<span id="r3d" class="t" style="left:1789.3px;top:971.8px;font-size:23.5px;font-family:'Liberation Sans',sans-serif;font-weight:400;color:#db940c;letter-spacing:-0.138px;">10/10</span>
<span id="r3e" class="t" style="left:1926.2px;top:967.1px;font-size:23.5px;font-family:'Liberation Sans',sans-serif;font-weight:400;color:#333;letter-spacing:0.295px;">Conversion Optimizati...</span>
<span id="r3f" class="t" style="left:1926.2px;top:1002.0px;font-size:23.5px;font-family:'Liberation Sans',sans-serif;font-weight:400;color:#333;letter-spacing:0.101px;">Conversion Rate</span>
<div class="abs" style="left:2216.3px;top:953.2px;width:260.2px;height:40.6px;border-radius:21px;border:2px solid #ededed"></div>
<div class="abs" style="left:2216.3px;top:998.6px;width:214.8px;height:40.8px;border-radius:21px;border:2px solid #ededed"></div>
<svg style="left:2234.8px;top:963.6px" width="20" height="20" viewBox="0 0 20 20"><g fill="none" stroke="#222" stroke-width="1.6" stroke-linecap="round" stroke-linejoin="round"><path d="M10.6 2.1H15.3C16.9 2.1 17.8 3 17.8 4.6V9C17.8 9.8 17.5 10.5 16.9 11.1L10.3 17.7C9.3 18.7 8 18.7 7 17.7L2.9 13.6C1.9 12.6 1.9 11.3 2.9 10.3L8.9 3C9.4 2.4 9.9 2.1 10.6 2.1Z"/><path d="M5.3 11.4L8.4 14.1"/></g></svg>
<svg style="left:2234.8px;top:1008.5px" width="20" height="20" viewBox="0 0 20 20"><g fill="none" stroke="#222" stroke-width="1.6" stroke-linecap="round" stroke-linejoin="round"><path d="M10.6 2.1H15.3C16.9 2.1 17.8 3 17.8 4.6V9C17.8 9.8 17.5 10.5 16.9 11.1L10.3 17.7C9.3 18.7 8 18.7 7 17.7L2.9 13.6C1.9 12.6 1.9 11.3 2.9 10.3L8.9 3C9.4 2.4 9.9 2.1 10.6 2.1Z"/><path d="M5.3 11.4L8.4 14.1"/></g></svg>
<span id="r3g" class="t" style="left:2260.4px;top:963.6px;font-size:23.5px;font-family:'Liberation Sans',sans-serif;font-weight:400;color:#333;letter-spacing:0.064px;">Landing Page D...</span>
<span id="r3h" class="t" style="left:2260.4px;top:1008.5px;font-size:23.5px;font-family:'Liberation Sans',sans-serif;font-weight:400;color:#333;letter-spacing:0.412px;">High Conver...</span>
<div class="abs" style="left:2435.3px;top:997.9px;width:42px;height:42px;border-radius:50%;background:#f0f0f0"></div>
<div class="abs" style="left:2448.3px;top:1017.6px;width:3px;height:3px;border-radius:50%;background:#2a2a2a"></div>
<div class="abs" style="left:2454.9px;top:1017.6px;width:3px;height:3px;border-radius:50%;background:#2a2a2a"></div>
<div class="abs" style="left:2461.5px;top:1017.6px;width:3px;height:3px;border-radius:50%;background:#2a2a2a"></div>
<span id="r3s" class="t" style="left:2516.7px;top:969.4px;font-size:29px;font-family:'Liberation Sans',sans-serif;font-weight:700;color:#e3141b;letter-spacing:0.000px;transform:scaleX(1.0262);transform-origin:0 0;">18</span>
<span id="r3t" class="t" style="left:2550.7px;top:977.4px;font-size:19.5px;font-family:'Liberation Sans',sans-serif;font-weight:400;color:#333;letter-spacing:0.011px;">/100</span>
<div class="abs" style="left:2518.2px;top:1008.5px;width:208.6px;height:11.4px;border-radius:6px;background:#efefef"></div>
<div class="abs" style="left:2518.2px;top:1008.5px;width:27.5px;height:11.4px;border-radius:6px;background:#e3141b"></div>
<div class="abs" style="left:2551.7px;top:1006.5px;width:2.5px;height:15.4px;border-radius:1px;background:#e3141b"></div>
<div class="abs" style="left:2622.8px;top:1006.5px;width:2.5px;height:15.4px;border-radius:1px;background:#fd8a1e"></div>
<div class="abs" style="left:2693.8px;top:1006.5px;width:2.5px;height:15.4px;border-radius:1px;background:#6fae86"></div>
</div></div>
</body></html>
